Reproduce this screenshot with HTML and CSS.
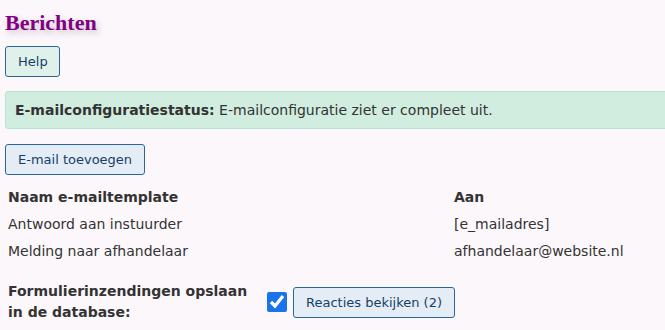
FILE: index.html
```html
<!DOCTYPE html>
<html lang="nl">
<head>
<meta charset="utf-8">
<link rel="stylesheet" href="styles.css">
</head>
<body>
<h1 class="title">Berichten</h1>
<div class="actions"><button class="btn btn-help" type="button">Help</button></div>
<div class="status"><p class="status-text"><strong>E-mailconfiguratiestatus:</strong> E-mailconfiguratie ziet er compleet uit.</p></div>
<div class="actions actions-add"><button class="btn btn-add" type="button">E-mail toevoegen</button></div>
<table class="mails">
  <thead>
    <tr><th class="col-name">Naam e-mailtemplate</th><th>Aan</th></tr>
  </thead>
  <tbody>
    <tr><td>Antwoord aan instuurder</td><td>[e_mailadres]</td></tr>
    <tr><td>Melding naar afhandelaar</td><td>afhandelaar@website.nl</td></tr>
  </tbody>
</table>
<div class="save-row">
  <label class="save-label" for="save">Formulierinzendingen opslaan in de database:</label>
  <input class="save-check" id="save" type="checkbox" checked>
  <button class="btn btn-add" type="button">Reacties bekijken (2)</button>
</div>
</body>
</html>
```
FILE: styles.css
```css
html, body {
  margin: 0;
  background: #fcf7fb;
}
body {
  padding: 0 5px;
  font-family: "DejaVu Sans", Verdana, sans-serif;
  font-size: 14px;
  color: #333;
  overflow: hidden;
}
.title {
  margin: 0;
  padding-top: 10px;
  font-family: "Liberation Serif", "Times New Roman", serif;
  font-size: 22px;
  line-height: 26px;
  font-weight: bold;
  color: #800080;
  text-shadow: 2px 3px 6px rgba(120, 90, 120, 0.35);
}
.actions {
  margin-top: 10px;
}
.actions-add {
  margin-top: 15px;
}
.btn {
  font-family: "DejaVu Sans", Verdana, sans-serif;
  font-size: 13px;
  color: #173f66;
  border: 1px solid #2c6697;
  border-radius: 3px;
  height: 31px;
  padding: 0 12px;
  cursor: pointer;
}
.btn-help {
  background: #e0f0ea;
  width: 55px;
}
.btn-add {
  background: #e4ecf5;
}
.status {
  margin-top: 14px;
  margin-right: -10px;
  height: 38px;
  box-sizing: border-box;
  padding: 0 9px;
  display: flex;
  align-items: center;
  background: #d1eddf;
  border: 1px solid #b7e3cc;
  border-radius: 3px;
}
.status-text {
  margin: 0;
}
.mails {
  margin-top: 8px;
  border-collapse: collapse;
  width: 660px;
}
.mails th, .mails td {
  text-align: left;
  padding: 3px 3px;
  height: 21px;
}
.mails th {
  font-weight: bold;
}
.col-name {
  width: 440px;
}
.save-row {
  margin-top: 17px;
  display: flex;
  align-items: center;
}
.save-label {
  width: 250px;
  margin-right: 9px;
  padding-left: 3px;
  font-weight: bold;
  line-height: 21px;
}
.save-check {
  width: 20px;
  height: 20px;
  margin: 0 6px 0 0;
  accent-color: #1a73e8;
}
```
